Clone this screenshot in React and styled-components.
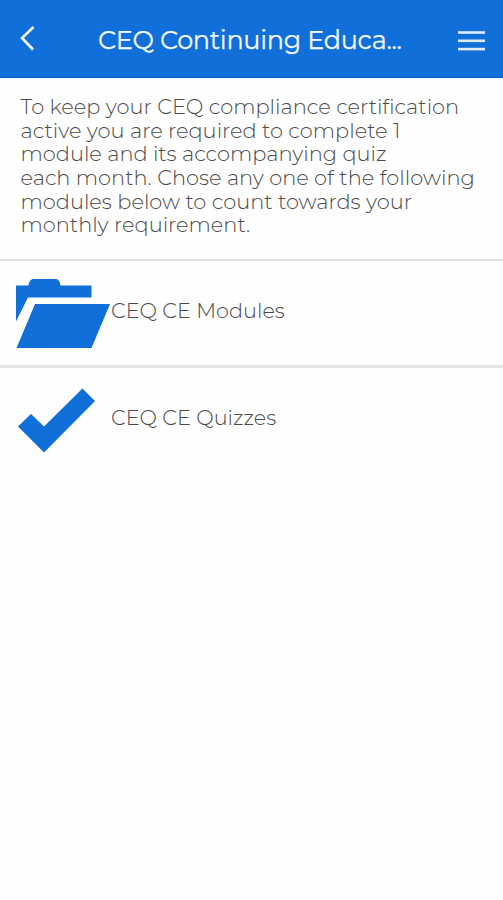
import React from "react";
import styled, { createGlobalStyle } from "styled-components";

const GlobalStyle = createGlobalStyle`
  * {
    box-sizing: border-box;
  }
  body {
    margin: 0;
    background-color: #fefefe;
    font-family: Montserrat, Inter, sans-serif;
  }
`;

const Container = styled.div`
  width: 503px;
  min-height: 900px;
  background-color: #fefefe;
`;

// ================ Header ===================
const Header = styled.header`
  display: flex;
  align-items: center;
  height: 78px;
  padding: 0 18px 0 20px;
  background-color: #106fd8;
  border-bottom: 1px solid #0a60cb;
`;

const IconButton = styled.button`
  display: flex;
  padding: 0;
  margin-top: ${(props) => props.$offset}px;
  border: none;
  background: none;
  cursor: pointer;
`;

const Title = styled.h1`
  flex: 1;
  margin: 3px 0 0 62px;
  color: #f4f8ff;
  font-size: 25.5px;
  font-weight: 400;
  line-height: 32px;
  letter-spacing: -0.3px;
  white-space: nowrap;
  -webkit-text-stroke: 0.25px #f4f8ff;
`;

// ================ Intro ===================
const Intro = styled.p`
  height: 181px;
  margin: 0;
  padding: 17px 0 0 20.5px;
  color: #4a4a4a;
  font-size: 20.95px;
  font-weight: 300;
  line-height: 23.65px;
`;

const Line = styled.span`
  display: block;
  white-space: nowrap;
`;

// ================ List ===================
const List = styled.div`
  border-top: 2px solid #dfdfdf;
`;

const Item = styled.div`
  display: flex;
  align-items: center;
  height: ${(props) => props.$height}px;
  padding-left: 15px;
  border-bottom: ${(props) => (props.$divider ? "3px solid #e4e4e4" : "none")};
`;

const ItemIcon = styled.div`
  display: flex;
  width: 96px;
`;

const ItemText = styled.span`
  margin-top: -6px;
  color: #4a4a4a;
  font-size: 20.8px;
  font-weight: 300;
  white-space: nowrap;
`;

const BackIcon = () => (
  <svg width="16" height="26" viewBox="0 0 16 26" fill="none">
    <path d="M13.5 2 L2 13 L13 24.5" stroke="#f2f7ff" strokeWidth="2.6" />
  </svg>
);

const MenuIcon = () => (
  <svg width="27" height="20" viewBox="0 0 27 20" fill="#dfeafb">
    <rect x="0" y="0.2" width="27" height="2.6" />
    <rect x="0" y="8.5" width="27" height="2.6" />
    <rect x="0" y="16.8" width="27" height="2.6" />
  </svg>
);

const FolderIcon = () => (
  <svg width="96" height="72" viewBox="0 0 96 72" fill="#106fd8">
    <path d="M1 44.5V8.5H13.5C14 4.5 15.5 2 19 2H40.5C43.5 2 45 4.5 45.5 8.5H76.5V20.5H13Z" />
    <path d="M20 27H95L76.5 71H1.5Z" />
  </svg>
);

const CheckIcon = () => (
  <svg width="96" height="66" viewBox="0 0 96 66" fill="#106fd8">
    <path d="M3 38.5L16 26L29 38.5L67.5 0.5L80 13L29 64.5Z" />
  </svg>
);

const introLines = [
  "To keep your CEQ compliance certification",
  "active you are required to complete 1",
  "module and its accompanying quiz",
  "each month. Chose any one of the following",
  "modules below to count towards your",
  "monthly requirement.",
];

const App = () => {
  return (
    <Container>
      <GlobalStyle />
      <Header>
        <IconButton aria-label="Back" $offset={-1}>
          <BackIcon />
        </IconButton>
        <Title>CEQ Continuing Educa...</Title>
        <IconButton aria-label="Menu" $offset={4}>
          <MenuIcon />
        </IconButton>
      </Header>
      <Intro>
        {introLines.map((line) => (
          <Line key={line}>{line} </Line>
        ))}
      </Intro>
      <List>
        <Item $height={107} $divider>
          <ItemIcon>
            <FolderIcon />
          </ItemIcon>
          <ItemText>CEQ CE Modules</ItemText>
        </Item>
        <Item $height={105}>
          <ItemIcon>
            <CheckIcon />
          </ItemIcon>
          <ItemText>CEQ CE Quizzes</ItemText>
        </Item>
      </List>
    </Container>
  );
};

export default App;
